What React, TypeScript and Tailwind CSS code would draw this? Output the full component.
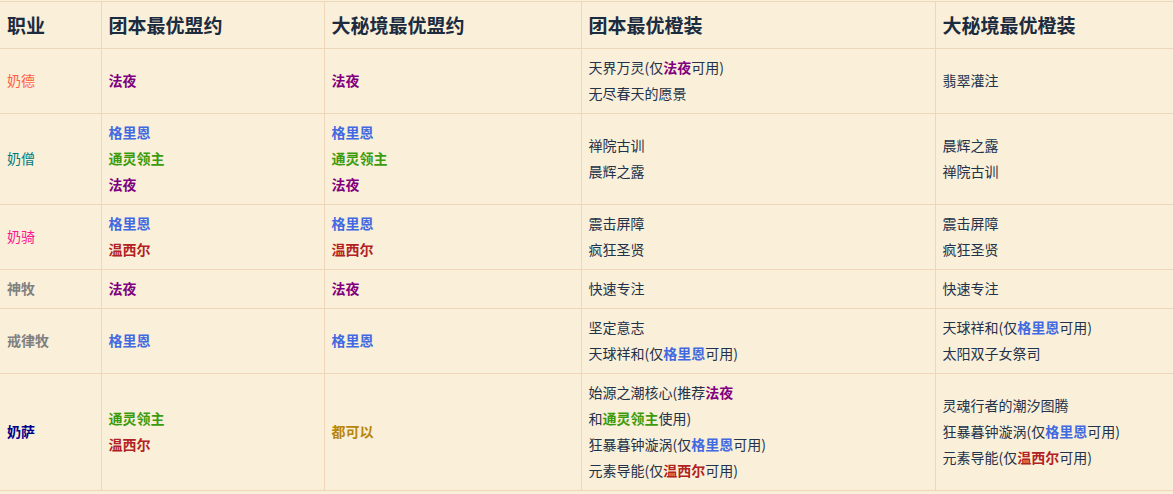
import React from "react"

type Seg = string | { t: string; c: string }
type Line = Seg[]

const FY = "text-[#800080] font-bold"
const GLE = "text-[#4169e1] font-bold"
const TL = "text-[#3a9c0c] font-bold"
const WXE = "text-[#b22222] font-bold"

const fy = { t: "法夜", c: FY }
const gle = { t: "格里恩", c: GLE }
const tl = { t: "通灵领主", c: TL }
const wxe = { t: "温西尔", c: WXE }

const rows: { cls: string; clsColor: string; cells: Line[][] }[] = [
  {
    cls: "奶德",
    clsColor: "text-[#ff5f45]",
    cells: [
      [[fy]],
      [[fy]],
      [["天界万灵(仅", fy, "可用)"], ["无尽春天的愿景"]],
      [["翡翠灌注"]],
    ],
  },
  {
    cls: "奶僧",
    clsColor: "text-[#007b80]",
    cells: [
      [[gle], [tl], [fy]],
      [[gle], [tl], [fy]],
      [["禅院古训"], ["晨辉之露"]],
      [["晨辉之露"], ["禅院古训"]],
    ],
  },
  {
    cls: "奶骑",
    clsColor: "text-[#ff1493]",
    cells: [
      [[gle], [wxe]],
      [[gle], [wxe]],
      [["震击屏障"], ["疯狂圣贤"]],
      [["震击屏障"], ["疯狂圣贤"]],
    ],
  },
  {
    cls: "神牧",
    clsColor: "text-[#808080] font-bold",
    cells: [[[fy]], [[fy]], [["快速专注"]], [["快速专注"]]],
  },
  {
    cls: "戒律牧",
    clsColor: "text-[#808080] font-bold",
    cells: [
      [[gle]],
      [[gle]],
      [["坚定意志"], ["天球祥和(仅", gle, "可用)"]],
      [["天球祥和(仅", gle, "可用)"], ["太阳双子女祭司"]],
    ],
  },
  {
    cls: "奶萨",
    clsColor: "text-[#00008b] font-semibold",
    cells: [
      [[tl], [wxe]],
      [[{ t: "都可以", c: "text-[#b8860b] font-bold" }]],
      [
        ["始源之潮核心(推荐", fy],
        ["和", tl, "使用)"],
        ["狂暴暮钟漩涡(仅", gle, "可用)"],
        ["元素导能(仅", wxe, "可用)"],
      ],
      [
        ["灵魂行者的潮汐图腾"],
        ["狂暴暮钟漩涡(仅", gle, "可用)"],
        ["元素导能(仅", wxe, "可用)"],
      ],
    ],
  },
]

const headers = ["职业", "团本最优盟约", "大秘境最优盟约", "团本最优橙装", "大秘境最优橙装"]
const widths = ["w-[101px]", "w-[223px]", "w-[257px]", "w-[354px]", ""]

function Cell({ lines }: { lines: Line[] }) {
  return (
    <div>
      {lines.map((line, i) => (
        <div key={i} className="leading-[26px] whitespace-nowrap">
          {line.map((s, j) =>
            typeof s === "string" ? (
              <span key={j}>{s}</span>
            ) : (
              <span key={j} className={s.c}>
                {s.t}
              </span>
            )
          )}
        </div>
      ))}
    </div>
  )
}

export default function App() {
  return (
    <div
      className="min-h-[494px] w-[1173px] overflow-hidden bg-[#faefd9] pt-px text-[#22324a]"
      style={{ fontFamily: '"Noto Sans CJK SC", "Noto Sans", sans-serif' }}
    >
      <table className="w-[1174px] table-fixed border-collapse">
        <thead>
          <tr>
            {headers.map((h, i) => (
              <th
                key={h}
                className={`${widths[i]} h-[47px] border-y border-[#eed6b9] px-[7px] text-left align-middle text-[19px] font-bold text-[#1b2b40] ${
                  i > 0 ? "border-l" : ""
                }`}
              >
                {h}
              </th>
            ))}
          </tr>
        </thead>
        <tbody>
          {rows.map((r) => (
            <tr key={r.cls}>
              <td className={`border-b border-[#eed6b9] px-[7px] pt-[5px] pb-[7px] align-middle text-[14px] ${r.clsColor}`}>
                {r.cls}
              </td>
              {r.cells.map((c, i) => (
                <td
                  key={i}
                  className="border-b border-l border-[#eed6b9] px-[7px] pt-[5px] pb-[7px] align-middle text-[14px]"
                >
                  <Cell lines={c} />
                </td>
              ))}
            </tr>
          ))}
        </tbody>
      </table>
    </div>
  )
}
